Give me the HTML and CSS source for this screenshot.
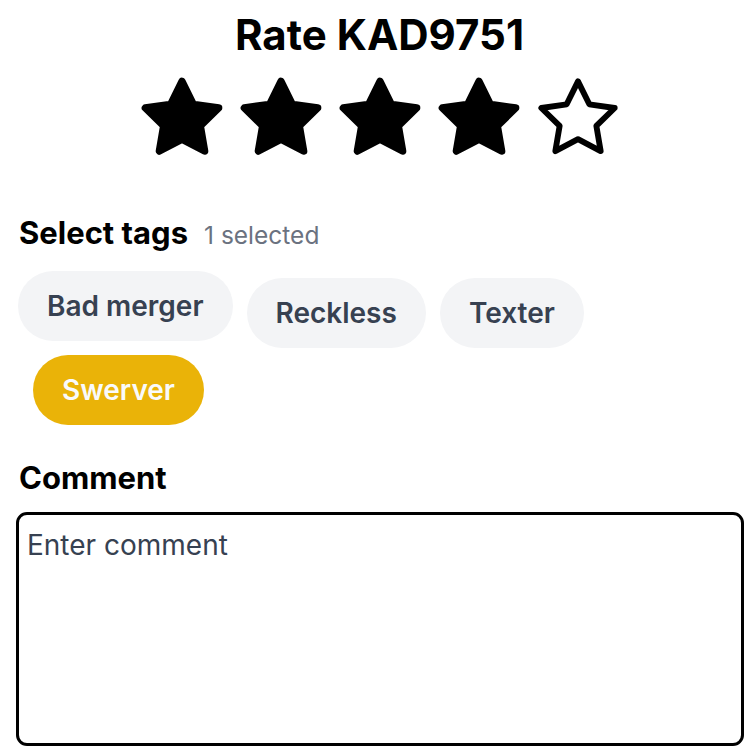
FILE: index.html
```html
<!DOCTYPE html>
<html>
<head>
<meta charset="utf-8">
<title>Rate KAD9751</title>
<link rel="stylesheet" href="styles.css">
</head>
<body>
<div class="sheet">
  <h1 class="title">Rate KAD9751</h1>
  <div class="stars">
    <svg class="star" viewBox="0 0 24 24"><path d="M12 2l3.09 6.26L22 9.27l-5 4.87 1.18 6.88L12 17.770l-6.18 3.25L7 14.14 2 9.27l6.910-1.010L12 2z"/></svg>
    <svg class="star" viewBox="0 0 24 24"><path d="M12 2l3.09 6.26L22 9.27l-5 4.87 1.18 6.88L12 17.77l-6.18 3.25L7 14.14 2 9.27l6.91-1.01L12 2z"/></svg>
    <svg class="star" viewBox="0 0 24 24"><path d="M12 2l3.09 6.26L22 9.27l-5 4.87 1.18 6.88L12 17.77l-6.18 3.25L7 14.14 2 9.27l6.91-1.01L12 2z"/></svg>
    <svg class="star" viewBox="0 0 24 24"><path d="M12 2l3.09 6.26L22 9.27l-5 4.87 1.18 6.88L12 17.77l-6.18 3.25L7 14.14 2 9.27l6.91-1.01L12 2z"/></svg>
    <svg class="star star-empty" viewBox="0 0 24 24"><path d="M12 2l3.09 6.26L22 9.27l-5 4.87 1.18 6.88L12 17.77l-6.18 3.25L7 14.14 2 9.27l6.91-1.01L12 2z"/></svg>
  </div>

  <div class="section-head">
    <span class="label">Select tags</span>
    <span class="count">1 selected</span>
  </div>
  <div class="tags">
    <div class="tag tag-raised">Bad merger</div>
    <div class="tag">Reckless</div>
    <div class="tag">Texter</div>
    <div class="tag tag-on tag-inset">Swerver</div>
  </div>

  <div class="label comment-label">Comment</div>
  <textarea class="comment" placeholder="Enter comment"></textarea>
</div>
</body>
</html>
```

FILE: styles.css
```css
html, body {
	margin: 0;
	padding: 0;
	background-color: #fff;
}

body {
	font-family: Inter, "Noto Sans", Arial, sans-serif;
	color: #000;
}

.sheet {
	padding: 0 13px 0 16px;
}

.title {
	margin: 0;
	padding-top: 10px;
	font-size: 42px;
	line-height: 50px;
	font-weight: 700;
	text-align: center;
}

.stars {
	display: flex;
	justify-content: center;
	gap: 11px;
	margin-top: 14px;
}

.star {
	width: 88px;
	height: 88px;
	display: block;
}

.star path {
	fill: #000;
	stroke: #000;
	stroke-width: 2;
	stroke-linejoin: round;
}

.star-empty path {
	fill: none;
	stroke-width: 1.6;
}

.section-head {
	display: flex;
	align-items: baseline;
	gap: 16px;
	margin-top: 52px;
	padding-left: 3px;
}

.label {
	font-size: 31px;
	line-height: 38px;
	font-weight: 700;
}

.count {
	font-size: 24.5px;
	color: #6b7280;
}

.tags {
	display: flex;
	flex-wrap: wrap;
	align-items: flex-start;
	gap: 7px 14px;
	margin-top: 19px;
	padding-left: 2px;
}

.tag {
	background-color: #f3f4f6;
	color: #374151;
	font-size: 28px;
	font-weight: 600;
	height: 70px;
	line-height: 70px;
	padding: 0 29px;
	border-radius: 35px;
	margin-top: 7px;
}

.tag-raised {
	margin-top: 0;
	margin-bottom: 7px;
}

.tag-inset {
	margin-top: 0;
	margin-left: 15px;
}

.tag-on {
	background-color: #eab308;
	color: #f9fafb;
}

.comment-label {
	margin-top: 34px;
	padding-left: 3px;
}

.comment {
	display: block;
	box-sizing: border-box;
	width: 728px;
	height: 234px;
	margin-top: 15px;
	border: 3px solid #000;
	border-radius: 11px;
	padding: 13px 8px;
	font-family: Inter, "Noto Sans", Arial, sans-serif;
	font-size: 28px;
	line-height: 34px;
	color: #374151;
	resize: none;
	outline: none;
}

.comment::placeholder {
	color: #374151;
}
```
